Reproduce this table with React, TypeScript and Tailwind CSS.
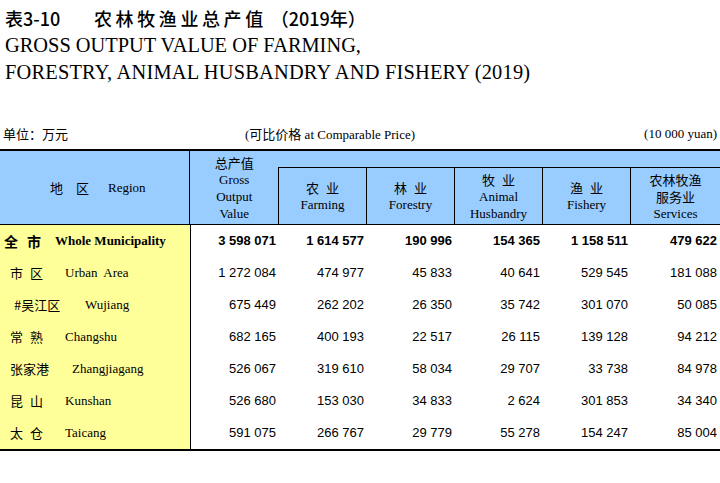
import React from "react";

const serif = "font-['Liberation_Serif','Noto_Sans_CJK_SC',serif]";
const cjk = "font-['Noto_Sans_CJK_SC',sans-serif]";
const arial = "font-['Liberation_Sans',Arial,sans-serif]";

type Row = {
  cn: string[];
  en: string;
  pl: string;
  w: string;
  bold?: boolean;
  vals: string[];
};

const rows: Row[] = [
  { cn: ["全", "市"], en: "Whole Municipality", pl: "pl-[4px]", w: "w-[51px]", bold: true, vals: ["3 598 071", "1 614 577", "190 996", "154 365", "1 158 511", "479 622"] },
  { cn: ["市", "区"], en: "Urban  Area", pl: "pl-[10px]", w: "w-[55px]", vals: ["1 272 084", "474 977", "45 833", "40 641", "529 545", "181 088"] },
  { cn: ["#吴江区"], en: "Wujiang", pl: "pl-[14px]", w: "w-[71px]", vals: ["675 449", "262 202", "26 350", "35 742", "301 070", "50 085"] },
  { cn: ["常", "熟"], en: "Changshu", pl: "pl-[10px]", w: "w-[55px]", vals: ["682 165", "400 193", "22 517", "26 115", "139 128", "94 212"] },
  { cn: ["张家港"], en: "Zhangjiagang", pl: "pl-[10px]", w: "w-[62px]", vals: ["526 067", "319 610", "58 034", "29 707", "33 738", "84 978"] },
  { cn: ["昆", "山"], en: "Kunshan", pl: "pl-[10px]", w: "w-[55px]", vals: ["526 680", "153 030", "34 833", "2 624", "301 853", "34 340"] },
  { cn: ["太", "仓"], en: "Taicang", pl: "pl-[10px]", w: "w-[55px]", vals: ["591 075", "266 767", "29 779", "55 278", "154 247", "85 004"] },
];

const widths = ["w-[88px]", "w-[88px]", "w-[88px]", "w-[88px]", "w-[88px]", "w-[89px]"];

const SubHead = ({ cn, en, last }: { cn: string[][]; en: string[]; last?: boolean }) => (
  <div
    className={`${last ? "w-[89px]" : "w-[88px] border-r border-black"} flex flex-col items-center justify-center text-[13px] leading-[17px] text-black`}
  >
    {cn.map((line, i) => (
      <div key={i} className={`${cjk} flex gap-[7px]`}>
        {line.map((c) => (
          <span key={c}>{c}</span>
        ))}
      </div>
    ))}
    {en.map((t) => (
      <div key={t} className={serif}>
        {t}
      </div>
    ))}
  </div>
);

const App = () => {
  return (
    <div className="w-[720px] h-[483px] bg-white text-black overflow-hidden">
      <div className="pt-[4px] pl-[5px]">
        <div className={`${cjk} flex items-center text-[18px] leading-[28px] font-medium`}>
          <span className="w-[89px]">表3-10</span>
          <span className="tracking-[3.6px]">农林牧渔业总产值</span>
          <span className="ml-[4px]">（2019年）</span>
        </div>
        <div className={`${serif} text-[20.4px] leading-[27px]`}>GROSS OUTPUT VALUE OF FARMING,</div>
        <div className={`${serif} text-[20.4px] leading-[27px] tracking-[0.2px]`}>FORESTRY, ANIMAL HUSBANDRY AND FISHERY (2019)</div>
      </div>

      <div className="mt-[40px] flex items-center h-[16px] text-[13px] pl-[3px] pr-[3px]">
        <span className={`${cjk} w-[242px]`}>单位：万元</span>
        <span className={serif}>
          (<span className={cjk}>可比价格</span> at Comparable Price)
        </span>
        <span className={`${serif} ml-auto`}>(10 000 yuan)</span>
      </div>

      <div className="mt-[7px] border-t-2 border-b-2 border-black">
        <div className="flex h-[74px] bg-[#99ccff] border-b border-black">
          <div className="w-[191px] border-r border-black flex items-center pl-[50px] text-[13px]">
            <span className={`${cjk} flex gap-[13px]`}>
              <span>地</span>
              <span>区</span>
            </span>
            <span className={`${serif} ml-[19px]`}>Region</span>
          </div>
          <div className="w-[88px] flex flex-col items-center justify-center text-[13px] leading-[17px]">
            <div className={cjk}>总产值</div>
            <div className={serif}>Gross</div>
            <div className={serif}>Output</div>
            <div className={serif}>Value</div>
          </div>
          <div className="flex-1 flex flex-col">
            <div className="h-[16px]" />
            <div className="flex-1 flex border-t border-l border-black">
              <SubHead cn={[["农", "业"]]} en={["Farming"]} />
              <SubHead cn={[["林", "业"]]} en={["Forestry"]} />
              <SubHead cn={[["牧", "业"]]} en={["Animal", "Husbandry"]} />
              <SubHead cn={[["渔", "业"]]} en={["Fishery"]} />
              <SubHead cn={[["农林牧渔"], ["服务业"]]} en={["Services"]} last />
            </div>
          </div>
        </div>

        {rows.map((r) => (
          <div key={r.en} className="flex h-[32px]">
            <div className={`w-[191px] bg-[#ffff99] border-r border-black flex items-center ${r.pl} text-[13px]`}>
              <span className={`${cjk} ${r.w} flex ${r.bold ? "gap-[9px] text-[14px] font-bold" : "gap-[7px]"}`}>
                {r.cn.map((c) => (
                  <span key={c}>{c}</span>
                ))}
              </span>
              <span className={`${serif} whitespace-pre ${r.bold ? "font-bold" : ""}`}>{r.en}</span>
            </div>
            {r.vals.map((v, i) => (
              <div
                key={i}
                className={`${widths[i]} flex items-center justify-end pr-[3px] text-[13px] ${arial} ${r.bold ? "font-bold" : ""}`}
              >
                {v}
              </div>
            ))}
          </div>
        ))}
      </div>
    </div>
  );
};

export default App;
